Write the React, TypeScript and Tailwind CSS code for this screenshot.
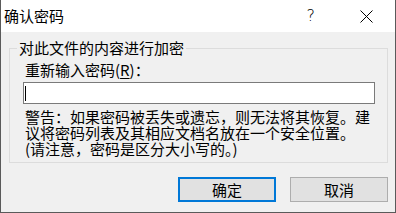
import React from "react";

export default function App() {
  return (
    <div className="w-[396px] h-[213px] flex flex-col border-x border-b border-[#5a5a5a] bg-[#f0f0f0] text-black text-[15px] font-['Noto_Sans_CJK_SC','Noto_Sans',sans-serif]">
      {/* Title bar */}
      <div className="h-[32px] bg-white flex items-center pl-[3px] pr-[22px] shrink-0">
        <span className="leading-[18px] flex-1">确认密码</span>
        <span className="leading-[16px] text-[16px] font-['DejaVu_Sans','Liberation_Sans',sans-serif] font-light">?</span>
        <svg className="ml-[45px]" width="13" height="13" viewBox="0 0 13 13">
          <path d="M0.5 0.5 L12.5 12.5 M12.5 0.5 L0.5 12.5" stroke="#000" strokeWidth="1" fill="none" />
        </svg>
      </div>
      {/* Body */}
      <div className="flex-1 flex flex-col pl-[8px] pr-[7px]">
        <fieldset className="mt-[8px] border border-[#dcdcdc]">
          <legend className="ml-[7px] px-[2px] leading-[16px]">对此文件的内容进行加密</legend>
          <div className="pl-[13px] pr-[12px] pt-[6px] pb-[5px] flex flex-col">
            <div className="ml-[2px] leading-[16px]">
              重新输入密码(<span className="underline underline-offset-2">R</span>)：
            </div>
            <div className="mt-[4px] h-[22px] border border-[#7a7a7a] bg-white flex items-center">
              <div className="ml-[1px] w-px h-[15px] bg-black" />
            </div>
            <div className="mt-[5px] ml-[2px] leading-[16px] whitespace-nowrap">
              <div>警告：如果密码被丢失或遗忘，则无法将其恢复。建</div>
              <div>议将密码列表及其相应文档名放在一个安全位置。</div>
              <div>(请注意，密码是区分大小写的。)</div>
            </div>
          </div>
        </fieldset>
        <div className="mt-[14px] flex justify-end gap-[14px]">
          <button className="w-[98px] h-[25px] border-2 border-[#0078d7] bg-[#e1e1e1] leading-[16px]">确定</button>
          <button className="w-[98px] h-[25px] border border-[#adadad] bg-[#e1e1e1] leading-[16px]">取消</button>
        </div>
      </div>
    </div>
  );
}
